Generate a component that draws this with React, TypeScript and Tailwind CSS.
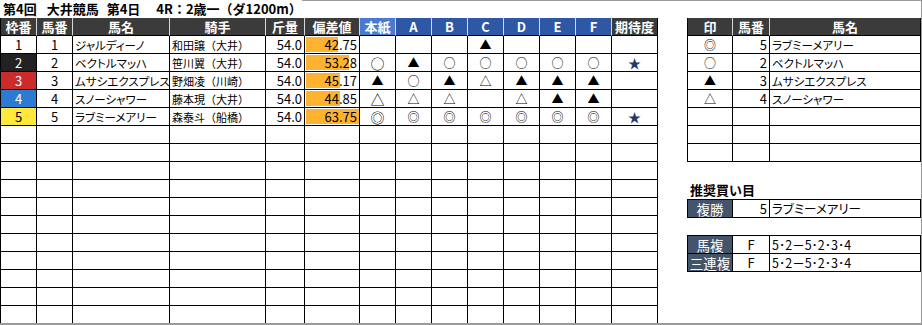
import React from "react";

const FONT = "font-['Noto_Sans_CJK_JP','Noto_Sans',sans-serif]";
const PALT = "[font-feature-settings:'palt']";
const MAIN_COLS =
  "grid grid-cols-[37px_36px_97px_96px_39px_55px_36px_36px_36px_36px_36px_36px_36px_46px]";
const SIDE_COLS = "grid grid-cols-[46px_37px_151px]";

const heads = ["枠番", "馬番", "馬名", "騎手", "斤量", "偏差値", "本紙", "A", "B", "C", "D", "E", "F", "期待度"];

type Horse = {
  waku: number;
  no: number;
  name: string;
  jockey: string;
  kinryo: string;
  score: number;
  marks: string[]; // 本紙, A-F
  star: boolean;
};

const horses: Horse[] = [
  { waku: 1, no: 1, name: "ジャルディーノ", jockey: "和田譲（大井）", kinryo: "54.0", score: 42.75, marks: ["", "", "", "▲", "", "", ""], star: false },
  { waku: 2, no: 2, name: "ベクトルマッハ", jockey: "笹川翼（大井）", kinryo: "54.0", score: 53.28, marks: ["○", "▲", "○", "○", "○", "○", "○"], star: true },
  { waku: 3, no: 3, name: "ムサシエクスプレス", jockey: "野畑凌（川崎）", kinryo: "54.0", score: 45.17, marks: ["▲", "○", "▲", "△", "▲", "▲", "▲"], star: false },
  { waku: 4, no: 4, name: "スノーシャワー", jockey: "藤本現（大井）", kinryo: "54.0", score: 44.85, marks: ["△", "△", "△", "", "△", "▲", "▲"], star: false },
  { waku: 5, no: 5, name: "ラブミーメアリー", jockey: "森泰斗（船橋）", kinryo: "54.0", score: 63.75, marks: ["◎", "◎", "◎", "◎", "◎", "◎", "◎"], star: true },
];

const wakuStyle: Record<number, string> = {
  1: "bg-white text-black",
  2: "bg-[#222222] text-white",
  3: "bg-[#cc2b2b] text-white",
  4: "bg-[#2c7bd3] text-white",
  5: "bg-[#ffe83a] text-black",
};

const picks = [
  { mark: "◎", no: "5", name: "ラブミーメアリー" },
  { mark: "○", no: "2", name: "ベクトルマッハ" },
  { mark: "▲", no: "3", name: "ムサシエクスプレス" },
  { mark: "△", no: "4", name: "スノーシャワー" },
  { mark: "", no: "", name: "" },
  { mark: "", no: "", name: "" },
  { mark: "", no: "", name: "" },
];

const cell =
  "h-[18px] leading-[16px] border-r border-b border-black flex items-center overflow-hidden whitespace-nowrap";

function Mark({ m, big }: { m: string; big?: boolean }) {
  if (!m) return null;
  const size = m === "▲" ? "text-[12px]" : big ? "text-[14px]" : "text-[12px]";
  return <span className={`${size} leading-none text-black`}>{m}</span>;
}

function MainTable() {
  return (
    <div className="w-[658px] shrink-0">
      <div className={MAIN_COLS}>
        {heads.map((h, i) => (
          <div
            key={h}
            className={`h-[18px] leading-[16px] border-b border-black flex items-center justify-center text-white font-bold text-[13px] ${
              i < 13 ? "border-r border-r-[#d9d9d9]" : "border-r border-r-black"
            } ${i === 0 ? "border-l border-l-black" : ""} ${
              i === 6 ? "bg-[#4a7ad0]" : i >= 7 && i <= 12 ? "bg-[#2e57a5]" : "bg-[#3b3b3b]"
            }`}
          >
            {h}
          </div>
        ))}
      </div>
      {Array.from({ length: 16 }).map((_, r) => {
        const h = horses[r];
        return (
          <div key={r} className={`${MAIN_COLS} text-[12px] text-black`}>
            <div className={`${cell} border-l justify-center text-[13px] ${h ? wakuStyle[h.waku] : ""}`}>{h?.waku}</div>
            <div className={`${cell} justify-center text-[13px]`}>{h?.no}</div>
            <div className={`${cell} pl-[2px] text-[11.5px] ${PALT}`}>{h?.name}</div>
            <div className={`${cell} pl-[2px] text-[11px]`}>{h?.jockey}</div>
            <div className={`${cell} justify-end pr-[2px] text-[13px]`}>{h?.kinryo}</div>
            <div className={`${cell} relative justify-end pr-[2px] text-[13px]`}>
              {h && (
                <div
                  className="absolute left-[1px] top-[1px] bottom-[1px] bg-[#ffb22f]"
                  style={{ width: `${h.score - 10.75}px` }}
                />
              )}
              <span className="relative">{h?.score.toFixed(2)}</span>
            </div>
            {Array.from({ length: 7 }).map((_, c) => (
              <div key={c} className={`${cell} justify-center`}>
                {h && <Mark m={h.marks[c]} big={c === 0} />}
              </div>
            ))}
            <div className={`${cell} justify-center`}>
              {h?.star && <span className="text-[13px] leading-none text-[#1f3a6e]">★</span>}
            </div>
          </div>
        );
      })}
    </div>
  );
}

function BetRow({ label, mid, value, midAlign, top }: { label: string; mid: string; value: string; midAlign: string; top?: boolean }) {
  return (
    <div className={`${SIDE_COLS} ${top ? "border-t border-black" : ""}`}>
      <div className="h-[18px] leading-[16px] border-l border-r border-b border-black bg-[#44546a] text-white text-[13.5px] flex items-center justify-center">
        {label}
      </div>
      <div className={`h-[18px] leading-[16px] border-r border-b border-black flex items-center ${midAlign} text-[13px]`}>{mid}</div>
      <div className={`h-[18px] leading-[16px] border-r border-b border-black flex items-center pl-[2px] text-[12.5px] ${PALT}`}>{value}</div>
    </div>
  );
}

function SidePanel() {
  return (
    <div className="ml-[29px] w-[234px] shrink-0">
      <div className={SIDE_COLS}>
        {["印", "馬番", "馬名"].map((h, i) => (
          <div
            key={h}
            className={`h-[18px] leading-[16px] bg-[#3b3b3b] text-white font-bold text-[13px] flex items-center justify-center border-b border-black ${
              i === 0 ? "border-l border-l-black" : ""
            } ${i < 2 ? "border-r border-r-[#d9d9d9]" : "border-r border-r-black"}`}
          >
            {h}
          </div>
        ))}
      </div>
      {picks.map((p, i) => (
        <div key={i} className={`${SIDE_COLS} text-[12px]`}>
          <div className={`${cell} border-l justify-center`}>{p.mark && <Mark m={p.mark} />}</div>
          <div className={`${cell} justify-end pr-[2px] text-[13px]`}>{p.no}</div>
          <div className={`${cell} pl-[2px] text-[11.5px] ${PALT}`}>{p.name}</div>
        </div>
      ))}

      <div className="mt-[20px] pl-[3px] h-[16px] leading-[16px] flex items-center font-bold text-[13px]">推奨買い目</div>
      <div className="mt-[1px]">
        <BetRow label="複勝" mid="5" value="ラブミーメアリー" midAlign="justify-end pr-[2px]" top />
      </div>
      <div className="mt-[17px]">
        <BetRow label="馬複" mid="F" value="5･2－5･2･3･4" midAlign="justify-center" top />
        <BetRow label="三連複" mid="F" value="5･2－5･2･3･4" midAlign="justify-center" />
      </div>
    </div>
  );
}

export default function App() {
  return (
    <div className={`w-[922px] h-[325px] bg-white text-black overflow-hidden border-r border-b-2 border-[#9a9a9a] ${FONT}`}>
      <div className="flex h-[18px]">
        <div className="pl-[3px] flex font-bold text-[13px] leading-[18px] whitespace-nowrap">
          <span className="mr-[10px]">第4回</span>
          <span className="mr-[8px]">大井競馬</span>
          <span className="mr-[16px]">第4日</span>
          <span>4R：2歳一（ダ1200m）</span>
        </div>
        <div className="flex-1 border-t border-[#9a9a9a]" />
      </div>
      <div className="flex">
        <MainTable />
        <SidePanel />
      </div>
    </div>
  );
}
